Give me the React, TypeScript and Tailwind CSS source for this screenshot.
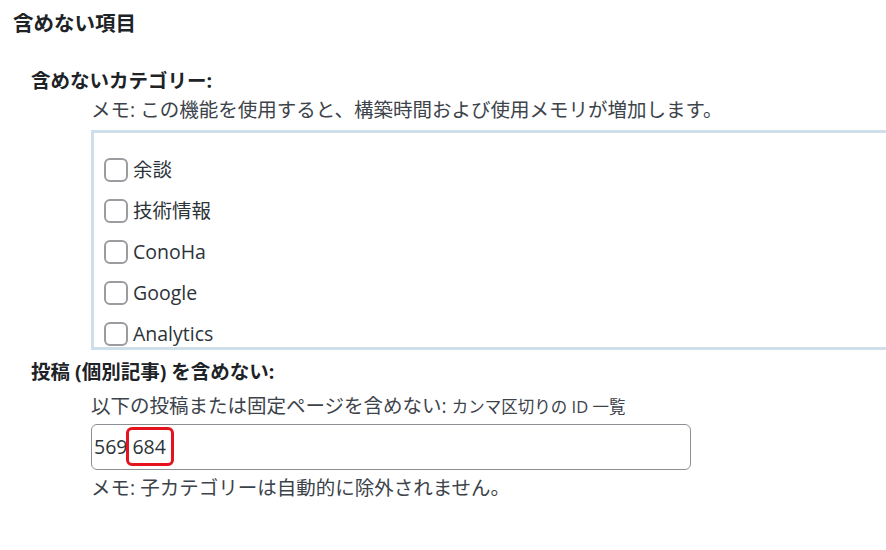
import React from "react";

const cats = ["余談", "技術情報", "ConoHa", "Google", "Analytics"];

export default function App() {
  return (
    <div className="w-[886px] h-[550px] overflow-hidden bg-white text-[#3c434a] font-['Open_Sans','Noto_Sans_CJK_JP',sans-serif] text-[19.5px] leading-[28px]">
      <h2 className="pl-[13px] pt-[9px] text-[20.5px] font-bold leading-[28px] text-[#1d2327]">
        含めない項目
      </h2>
      <div className="mt-[30px] pl-[31px] font-bold text-[#1d2327]">含めないカテゴリー:</div>
      <div className="mt-[1px] pl-[91px]">メモ: この機能を使用すると、構築時間および使用メモリが増加します。</div>
      <div className="mt-[6px] ml-[91px] w-[900px] h-[220px] overflow-hidden border-[3px] border-[#cfdfea] pt-[16px] pl-[10px]">
        {cats.map((c) => (
          <div key={c} className="flex h-[41px] items-center gap-[5px]">
            <span className="h-[24px] w-[24px] shrink-0 rounded-[6px] border-2 border-[#9a9ca0] bg-white" />
            <span className="text-[#2c3338]">{c}</span>
          </div>
        ))}
      </div>
      <div className="mt-[8px] pl-[31px] font-bold text-[#1d2327]">投稿 (個別記事) を含めない:</div>
      <div className="mt-[6px] pl-[91px]">
        以下の投稿または固定ページを含めない: <span className="text-[16.5px]">カンマ区切りの ID 一覧</span>
      </div>
      <div className="mt-[3px] ml-[91px] flex h-[46px] w-[600px] items-center rounded-[6px] border border-[#8c8f94] pl-[2px] text-[#2c3338]">
        <span>569</span>
        <span className="relative pl-[5px] pr-[8px]">
          684
          <span className="absolute left-[-1px] right-[0px] top-[-6px] bottom-[-5px] rounded-[6px] border-[3px] border-[#e5131d]" />
        </span>
      </div>
      <div className="mt-[4px] pl-[91px]">メモ: 子カテゴリーは自動的に除外されません。</div>
    </div>
  );
}
